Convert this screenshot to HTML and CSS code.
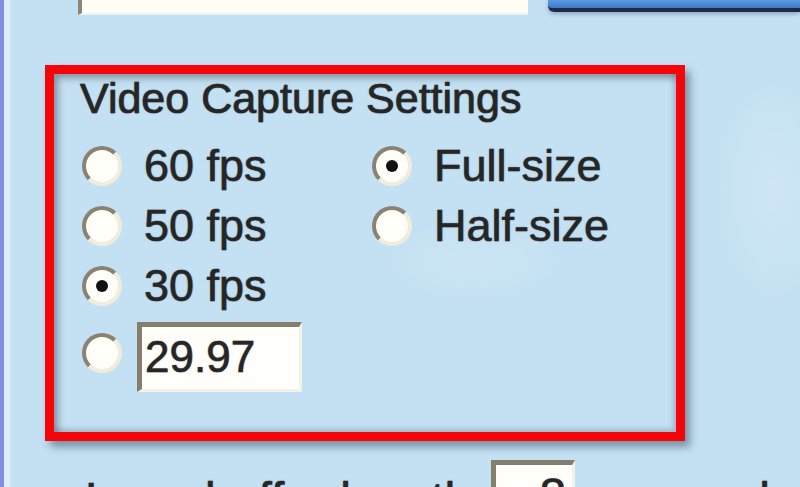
FILE: index.html
```html
<!DOCTYPE html>
<html lang="en">
<head>
    <meta charset="UTF-8" />
    <meta name="viewport" content="width=device-width, initial-scale=1.0"/>
    <title>Video Capture Settings</title>
    <link rel="stylesheet" href="styles.css">
</head>
<body>
    <div class="window">
        <div class="toolbar">
            <div class="path-field"></div>
            <div class="browse-btn"></div>
        </div>

        <div class="capture-frame">
            <div class="group-title">Video Capture Settings</div>
            <div class="options">
                <label class="opt"><span class="radio"></span>60 fps</label>
                <label class="opt"><span class="radio checked"></span>Full-size</label>
                <label class="opt"><span class="radio"></span>50 fps</label>
                <label class="opt"><span class="radio"></span>Half-size</label>
                <label class="opt"><span class="radio checked"></span>30 fps</label>
                <span></span>
                <label class="opt custom"><span class="radio"></span><span class="textbox">29.97</span></label>
            </div>
        </div>

        <div class="buffer-row">
            <span class="buffer-label">Loop buffer length</span>
            <span class="num-box">8</span>
            <span class="buffer-unit">seconds</span>
        </div>
    </div>
</body>
</html>
```
FILE: styles.css
```css
body {
    margin: 0;
    font-family: "Liberation Sans", Arial, sans-serif;
}
.window {
    width: 800px;
    height: 487px;
    overflow: hidden;
    box-sizing: border-box;
    border-left: 4px solid #8090de;
    background-color: #c4e1f3;
    background-image:
        radial-gradient(ellipse 60px 110px at 770px 190px, rgba(255, 255, 255, 0.18), rgba(255, 255, 255, 0) 100%),
        radial-gradient(ellipse 90px 40px at 470px 260px, rgba(255, 255, 255, 0.12), rgba(255, 255, 255, 0) 100%),
        linear-gradient(to right, #dceffa 0, #dceffa 4px, rgba(0, 0, 0, 0) 8px);
    color: #262626;
}
.toolbar {
    display: flex;
    height: 15px;
}
.path-field {
    margin-left: 74px;
    width: 450px;
    height: 15px;
    box-sizing: border-box;
    background: #fffdf4;
    border-left: 4px solid #8c8578;
    border-bottom: 2px solid #eef3f0;
    filter: blur(0.6px);
}
.browse-btn {
    margin-left: 20px;
    flex: 1;
    height: 12px;
    box-sizing: border-box;
    background: linear-gradient(#5a9be0, #3d78c6);
    border-bottom: 4px solid #1d2c46;
    border-bottom-left-radius: 6px;
    box-shadow: 0 2px 4px rgba(20, 40, 70, 0.3);
}
.capture-frame {
    margin-top: 50px;
    margin-left: 41px;
    width: 640px;
    height: 376px;
    box-sizing: border-box;
    border: 9px solid #f4050a;
    padding-left: 26px;
    box-shadow:
        5px 6px 8px rgba(30, 50, 70, 0.45),
        inset 4px 4px 7px rgba(70, 80, 90, 0.55),
        inset -4px -4px 4px rgba(110, 130, 150, 0.3);
}
.group-title {
    font-size: 43px;
    line-height: 48px;
    -webkit-text-stroke: 0.7px #262626;
    text-shadow: 0 0 1.5px rgba(20, 20, 20, 0.6);
}
.options {
    display: grid;
    grid-template-columns: 290px auto;
    grid-auto-rows: 60px;
    align-items: center;
    margin-top: 14px;
    margin-left: 2px;
}
.opt {
    display: flex;
    align-items: center;
    font-size: 45px;
    line-height: 50px;
    -webkit-text-stroke: 0.5px #262626;
    text-shadow: 0 0 1.5px rgba(20, 20, 20, 0.55);
}
.opt.custom {
    align-self: start;
    margin-top: 6px;
    height: 70px;
}
.radio {
    width: 40px;
    height: 40px;
    flex-shrink: 0;
    box-sizing: border-box;
    border-radius: 50%;
    border: 4px solid;
    border-color: #8a8273 #f1ecdc #f1ecdc #8a8273;
    background: #fffef8;
    margin-right: 22px;
    display: flex;
    align-items: center;
    justify-content: center;
    filter: blur(0.7px);
}
.radio.checked::after {
    content: '';
    width: 12px;
    height: 12px;
    border-radius: 50%;
    background: #111;
}
.opt.custom .radio {
    margin-right: 15px;
    margin-bottom: 8px;
}
.textbox {
    width: 165px;
    height: 70px;
    box-sizing: border-box;
    border-style: solid;
    border-width: 5px 3px 3px 5px;
    border-color: #857d6e #f4f1e6 #f4f1e6 #857d6e;
    background: #fffefa;
    font-size: 44px;
    line-height: 60px;
    padding-left: 3px;
}
.buffer-row {
    display: flex;
    align-items: flex-start;
    margin-top: 19px;
    margin-left: 81px;
    font-size: 48px;
    line-height: 56px;
    white-space: nowrap;
    -webkit-text-stroke: 0.5px #262626;
    text-shadow: 0 0 1.5px rgba(20, 20, 20, 0.55);
}
.buffer-label {
    margin-top: 12px;
}
.num-box {
    margin-left: 20px;
    width: 113px;
    height: 70px;
    box-sizing: border-box;
    border-style: solid;
    border-width: 5px 3px 3px 5px;
    border-color: #857d6e #f4f1e6 #f4f1e6 #857d6e;
    background: #fffefa;
    text-align: right;
    padding-right: 6px;
    padding-top: 3px;
}
.buffer-unit {
    margin-left: 25px;
    margin-top: 12px;
    letter-spacing: 3px;
}
```
